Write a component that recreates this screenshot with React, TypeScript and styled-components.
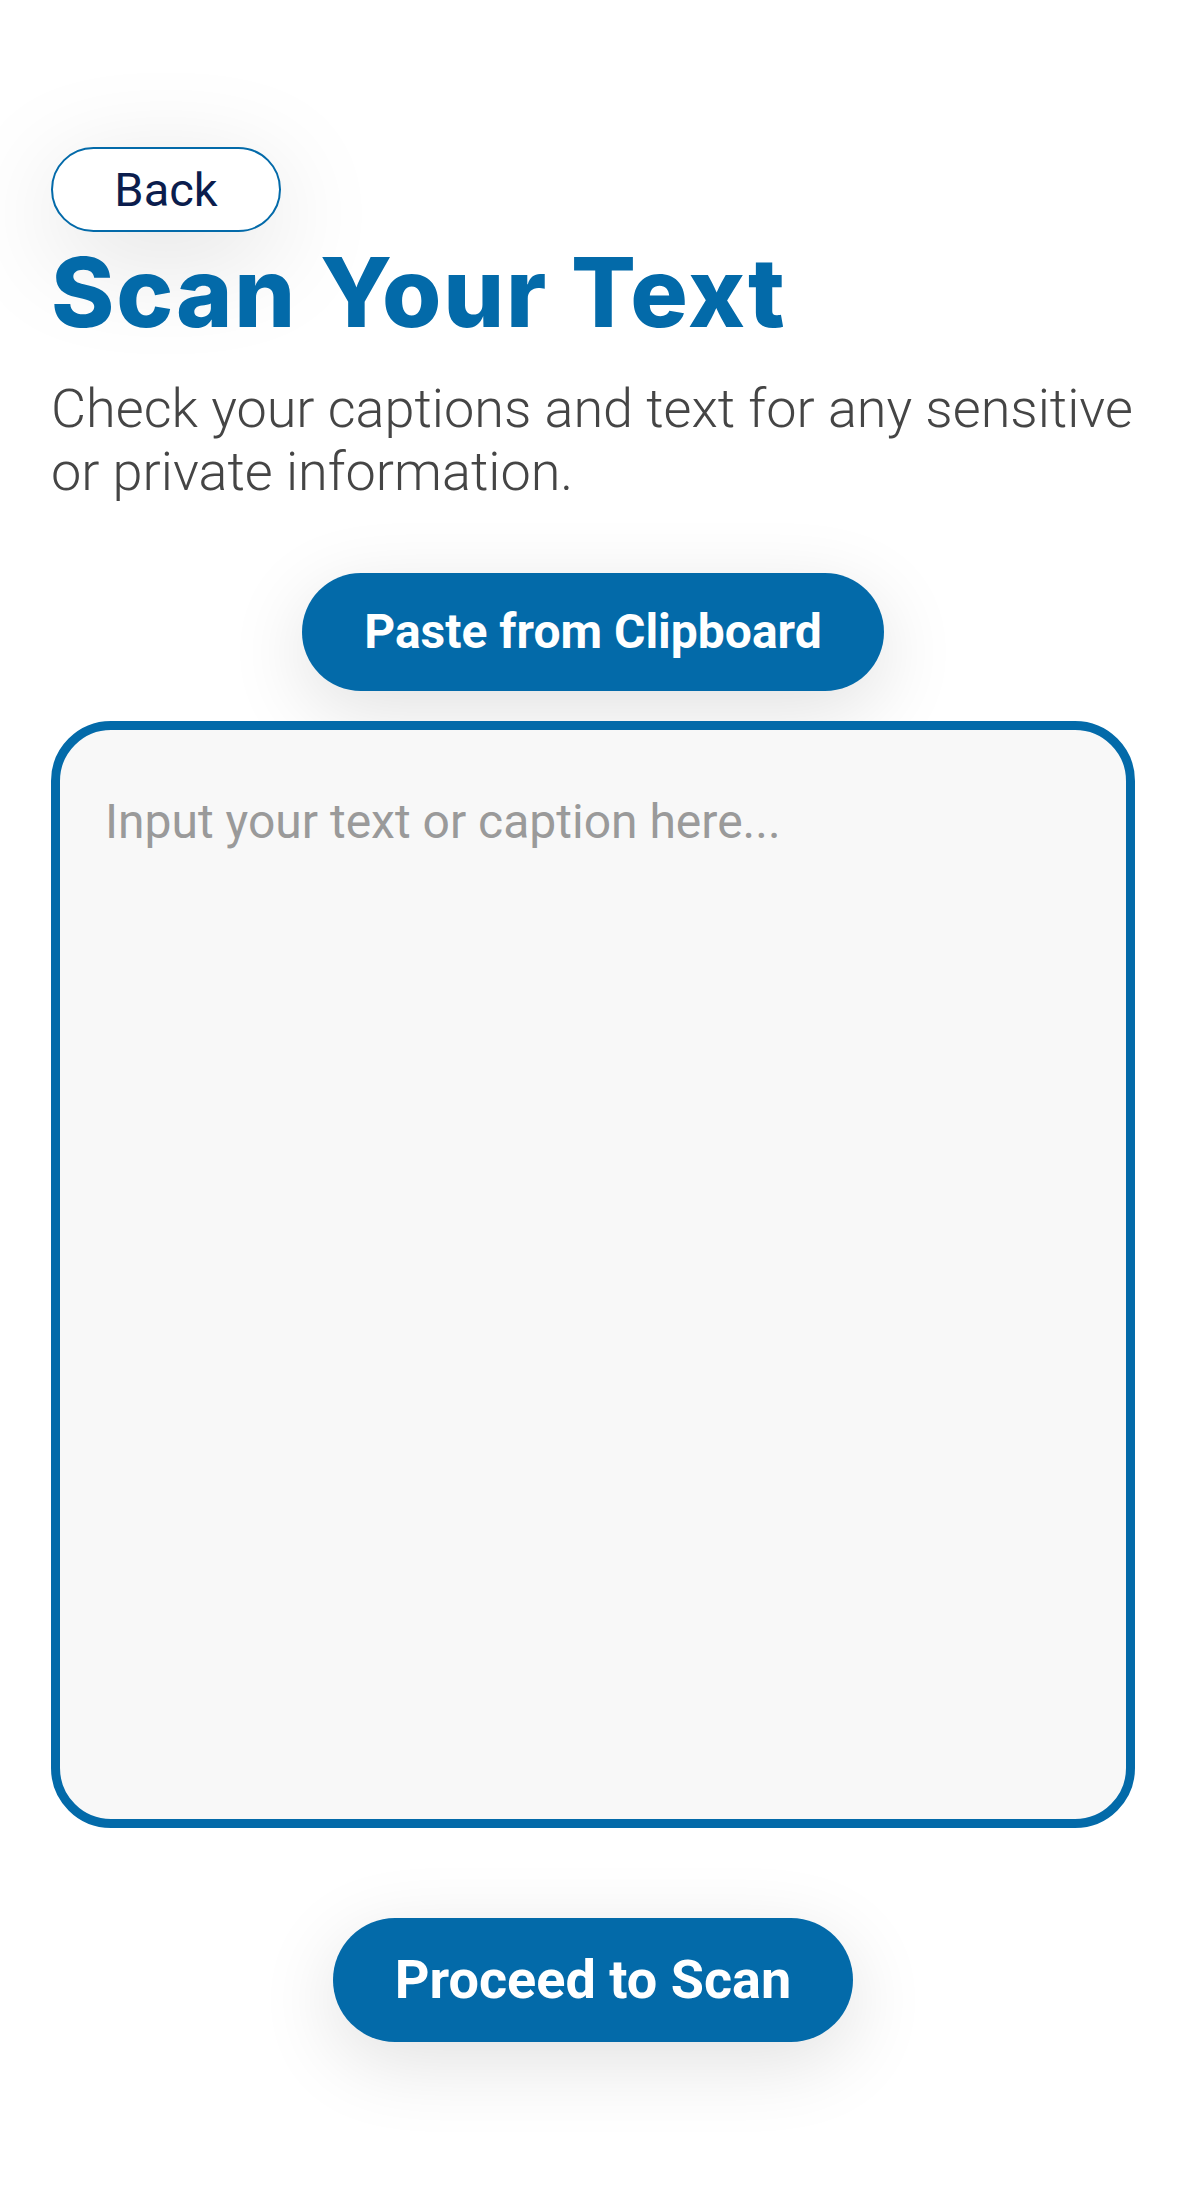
import styled, {createGlobalStyle} from 'styled-components';

const GlobalStyle = createGlobalStyle`
    html, body {
        margin: 0;
        padding: 0;
        background: #ffffff;
    }

    body {
        font-family: Roboto, "Liberation Sans", sans-serif;
    }
`;

const ScanText = () => {
    return (
        <>
            <GlobalStyle/>
            <Page>
                <BackButton type="button">Back</BackButton>
                <Title>Scan Your Text</Title>
                <Intro>Check your captions and text for any sensitive or private information.</Intro>

                <PillButton type="button" $size={48}>Paste from Clipboard</PillButton>

                <TextBox placeholder="Input your text or caption here..."/>

                <PillButton type="button" $size={54} $gap={90}>Proceed to Scan</PillButton>
            </Page>
        </>
    );
};

export default ScanText;

// styles
const Page = styled.main`
    display: flex;
    flex-direction: column;
    align-items: center;
    min-height: 2206px;
    box-sizing: border-box;
    padding: 147px 61px 0 51px;
`;

const BackButton = styled.button`
    align-self: flex-start;
    width: 230px;
    height: 85px;
    border: 2.5px solid #036aa9;
    border-radius: 43px;
    background: #ffffff;
    color: #0b1d4d;
    font-family: Roboto, "Liberation Sans", sans-serif;
    font-size: 47px;
    font-weight: 400;
    box-shadow: 0 24px 110px rgba(0, 0, 0, 0.13);
    cursor: pointer;
`;

const Title = styled.h1`
    align-self: flex-start;
    margin: 8px 0 0;
    font-family: Inter, "Open Sans", sans-serif;
    font-size: 96px;
    font-weight: 800;
    line-height: 1.1;
    letter-spacing: 1.8px;
    color: #036aa9;
`;

const Intro = styled.p`
    align-self: stretch;
    margin: 31px 0 0;
    font-family: Roboto, "Liberation Sans", sans-serif;
    font-size: 54px;
    font-weight: 300;
    line-height: 63px;
    color: #454545;
`;

const PillButton = styled.button<{ $size: number; $gap?: number }>`
    margin-top: ${({$gap}) => $gap ?? 70}px;
    padding: 0 62px;
    height: ${({$size}) => ($size > 50 ? 124 : 118)}px;
    border: none;
    border-radius: 62px;
    background: #036aa9;
    color: #ffffff;
    font-family: Roboto, "Liberation Sans", sans-serif;
    font-size: ${({$size}) => $size}px;
    font-weight: 700;
    box-shadow: 0 20px 80px rgba(0, 0, 0, 0.12);
    cursor: pointer;
`;

const TextBox = styled.textarea`
    align-self: stretch;
    margin-top: 30px;
    height: 1107px;
    box-sizing: border-box;
    padding: 63px 45px;
    border: 9px solid #036aa9;
    border-radius: 60px;
    background: #f8f8f8;
    resize: none;
    outline: none;
    font-family: Roboto, "Liberation Sans", sans-serif;
    font-size: 48px;
    color: #333333;

    &::placeholder {
        color: #9a9a9a;
    }
`;
